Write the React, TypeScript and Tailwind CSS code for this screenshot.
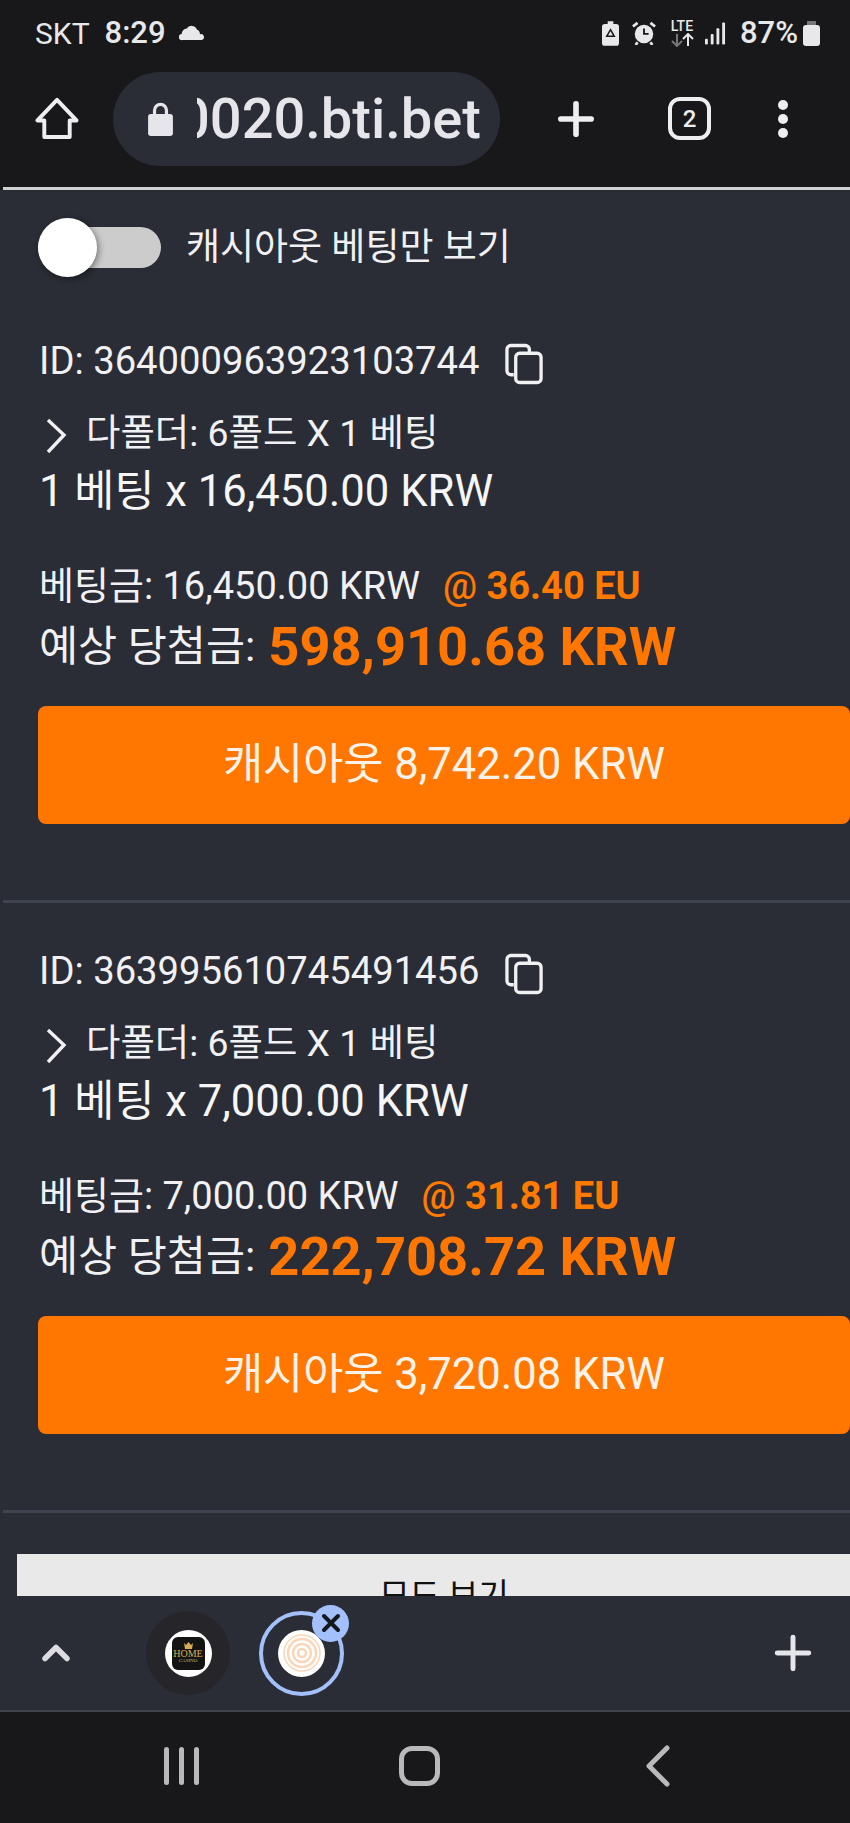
import { Plus, ChevronUp } from "lucide-react";

const font = { fontFamily: '"Roboto", "Noto Sans CJK KR", sans-serif' };

function BetCard({ id, stake, rate, win, cash }: { id: string; stake: string; rate: string; win: string; cash: string }) {
  return (
    <div className="pt-[47px]">
      <div className="flex h-[44px] items-center pl-[39px] text-[38.2px] text-[#f1f1f3]">
        <span>ID: {id}</span>
        <svg className="ml-[25px] mt-[4px]" width="39" height="42" viewBox="0 0 40 42" fill="none" stroke="#f1f1f3" strokeWidth="3.4">
          <rect x="11" y="10" width="26" height="30" rx="4" />
          <path d="M9 32H6a4 4 0 0 1-4-4V6a4 4 0 0 1 4-4h15a4 4 0 0 1 4 4v3" />
        </svg>
      </div>
      <div className="mt-[29px] flex h-[40px] items-center pl-[45px] text-[37.4px] text-[#f1f1f3]">
        <svg className="mt-[6px]" width="22" height="36" viewBox="0 0 22 36" fill="none" stroke="#f1f1f3" strokeWidth="3.4">
          <path d="M3 2l16 15L3 34" />
        </svg>
        <span className="ml-[19px]">다폴더: 6폴드 X 1 베팅</span>
      </div>
      <div className="mt-[17px] flex h-[44px] items-center pl-[39px] text-[43.6px] text-[#f6f6f7]">1 베팅 x {stake} KRW</div>
      <div className="mt-[52px] flex h-[40px] items-center pl-[39px] text-[38px] text-[#f1f1f3]">
        <span>베팅금: {stake} KRW</span>
        <span className="ml-[23px] font-medium text-[#ff7a00]">
          @ <span className="font-bold">{rate} EU</span>
        </span>
      </div>
      <div className="mt-[16px] flex h-[50px] items-center pl-[39px] text-[42.5px] text-[#f1f1f3]">
        <span>예상 당첨금:</span>
        <span className="ml-[13px] text-[54.2px] font-bold text-[#ff7700]">{win} KRW</span>
      </div>
      <div className="ml-[38px] mt-[34px] flex h-[118px] w-[812px] items-center justify-center rounded-[8px] bg-[#ff7700] text-[43.6px] text-[#fbf3ea]">
        캐시아웃 {cash} KRW
      </div>
      <div className="ml-[3px] mt-[76px] h-[3px] bg-[#3f424f]" />
    </div>
  );
}

export default function App() {
  return (
    <div style={font} className="flex h-[1823px] w-[850px] flex-col overflow-hidden bg-[#18181a]">
      {/* status bar */}
      <div className="flex h-[66px] shrink-0 items-center justify-between pl-[35px] pr-[30px] text-[#e8e8ea]">
        <div className="flex items-center">
          <span className="text-[30px]">SKT</span>
          <span className="ml-[15px] text-[31px] font-medium">8:29</span>
          <svg className="ml-[13px]" width="26" height="16" viewBox="0 0 28 18" fill="#e8e8ea">
            <path d="M3 17a3.5 3.5 0 0 1-.6-7A6 6 0 0 1 8 4a6.5 6.5 0 0 1 11.5 1A6 6 0 0 1 23 10.300a3.400 3.400 0 0 1 2 6.700z" />
          </svg>
        </div>
        <div className="flex items-center">
          <svg width="17" height="25" viewBox="0 0 18 26" fill="#e8e8ea">
            <path d="M6 0h6v3h3a3 3 0 0 1 3 3v17a3 3 0 0 1-3 3H3a3 3 0 0 1-3-3V6a3 3 0 0 1 3-3h3z" />
            <path d="M9 9l4 7H5z" fill="none" stroke="#18181a" strokeWidth="1.600" />
          </svg>
          <svg className="ml-[13px]" width="24" height="24" viewBox="0 0 26 26">
            <circle cx="13" cy="14" r="10" fill="#e8e8ea" />
            <path d="M13 8v6h5" fill="none" stroke="#18181a" strokeWidth="2" />
            <path d="M1 6l5-4M25 6l-5-4M6 23l-2 3M20 23l2 3" stroke="#e8e8ea" strokeWidth="3" />
          </svg>
          <div className="ml-[14px] flex flex-col items-center leading-none">
            <span className="text-[14px] font-medium leading-[14px]">LTE</span>
            <svg width="24" height="14" viewBox="0 0 24 14" fill="none" strokeWidth="2">
              <path d="M7 1v11M2 8l5 5 5-5" stroke="#77777a" />
              <path d="M18 13V2M13 6l5-5 5 5" stroke="#e8e8ea" />
            </svg>
          </div>
          <svg className="ml-[11px]" width="21" height="24" viewBox="0 0 22 24" fill="#e8e8ea">
            <rect x="0" y="18" width="3" height="6" rx="1" />
            <rect x="6" y="13" width="3" height="11" rx="1" />
            <rect x="12" y="7" width="3" height="17" rx="1" />
            <rect x="18" y="1" width="3" height="23" rx="1" />
          </svg>
          <span className="ml-[14px] text-[31px] font-medium">87%</span>
          <svg className="ml-[5px]" width="17" height="25" viewBox="0 0 17 25" fill="#e8e8ea">
            <rect x="4" y="0" width="9" height="4" fill="#77777a" />
            <rect x="0" y="4" width="17" height="21" rx="3" />
          </svg>
        </div>
      </div>

      {/* browser toolbar */}
      <div className="flex h-[121px] shrink-0 items-start">
        <svg className="ml-[35px] mt-[31px]" width="44" height="43" viewBox="0 0 44 44" fill="none" stroke="#eeeef0" strokeWidth="4" strokeLinejoin="round">
          <path d="M22 3L2 24h7v17h26V24h7z" />
        </svg>
        <div className="ml-[34px] mt-[6px] flex h-[94px] w-[387px] items-center overflow-hidden rounded-full bg-[#2a2c36] pl-[35px]">
          <svg width="25" height="34" viewBox="0 0 27 37" fill="#e6e6ea" className="shrink-0">
            <path d="M7 14V9a6.500 6.500 0 0 1 13 0v5" fill="none" stroke="#e6e6ea" strokeWidth="3.500" />
            <rect x="0" y="13" width="27" height="24" rx="3" />
          </svg>
          <div className="ml-[24px] w-[284px] overflow-hidden">
            <div className="-ml-[19px] whitespace-nowrap text-[56px] font-medium text-[#e6e6ea]">0020.bti.bet</div>
          </div>
        </div>
        <Plus size={52} strokeWidth={2.6} color="#eeeef0" className="ml-[50px] mt-[27px]" />
        <div className="ml-[66px] mt-[31px] flex h-[43px] w-[43px] items-center justify-center rounded-[12px] border-[4px] border-[#eeeef0] text-[24px] font-medium text-[#eeeef0]">2</div>
        <div className="ml-[67px] mt-[34px] flex flex-col gap-[4px]">
          <div className="h-[10px] w-[10px] rounded-full bg-[#eeeef0]" />
          <div className="h-[10px] w-[10px] rounded-full bg-[#eeeef0]" />
          <div className="h-[10px] w-[10px] rounded-full bg-[#eeeef0]" />
        </div>
      </div>
      <div className="ml-[3px] h-[3px] shrink-0 bg-[#d0d0d4]" />

      {/* page */}
      <div className="min-h-0 flex-1 overflow-hidden bg-[#2a2c36]">
        <div className="mt-[28px] flex h-[59px] items-center pl-[38px]">
          <div className="relative h-[41px] w-[123px] rounded-full bg-[#cccccc]">
            <div className="absolute left-0 top-[-9px] h-[59px] w-[59px] rounded-full bg-white shadow-[2px_2px_6px_rgba(0,0,0,0.4)]" />
          </div>
          <span className="ml-[25px] text-[37px] text-[#f1f1f3]">캐시아웃 베팅만 보기</span>
        </div>
        <div className="mt-[16px]">
          <BetCard id="364000963923103744" stake="16,450.00" rate="36.40" win="598,910.68" cash="8,742.20" />
          <BetCard id="363995610745491456" stake="7,000.00" rate="31.81" win="222,708.72" cash="3,720.08" />
        </div>
        <div className="ml-[17px] mt-[41px] flex h-[84px] w-[854px] items-center justify-center bg-[#e9e9e9] text-[33px] text-[#111]">모드 보기</div>
      </div>

      {/* tab strip */}
      <div className="relative flex h-[114px] shrink-0 items-center bg-[#2a2c36]">
        <ChevronUp size={44} strokeWidth={3} color="#dcdce0" className="ml-[34px]" />
        <div className="ml-[68px] flex h-[84px] w-[84px] items-center justify-center rounded-full bg-[#26262a]">
          <div className="flex h-[47px] w-[47px] items-center justify-center rounded-full bg-white">
            <div className="flex h-[33px] w-[33px] flex-col items-center justify-center rounded-[6px] bg-[#141414] leading-none text-[#d8ac55]" style={{ fontFamily: '"Liberation Serif", serif' }}>
              <svg width="9" height="7" viewBox="0 0 9 7" fill="#d8ac55">
                <path d="M0 1l2 2 2.500-3L7 3l2-2-1 6H1z" />
              </svg>
              <span className="text-[10px] leading-[9px]">HOME</span>
              <span className="text-[5px] leading-[6px]">CASINO</span>
            </div>
          </div>
        </div>
        <div className="relative ml-[29px] flex h-[85px] w-[85px] items-center justify-center rounded-full border-[4px] border-[#a4c0fa]">
          <div className="flex h-[47px] w-[47px] items-center justify-center rounded-full bg-white">
            <svg width="38" height="38" viewBox="0 0 38 38" fill="none" stroke="#fad5b8" strokeWidth="2.500">
              <circle cx="19" cy="19" r="4" />
              <circle cx="19" cy="19" r="9" />
              <circle cx="19" cy="19" r="14" />
              <circle cx="19" cy="19" r="18" strokeWidth="1.500" />
            </svg>
          </div>
          <div className="absolute right-[-9px] top-[-10px] flex h-[37px] w-[37px] items-center justify-center rounded-full bg-[#a4c0fa]">
            <svg width="22" height="22" viewBox="0 0 22 22" stroke="#15171f" strokeWidth="4" strokeLinecap="round">
              <path d="M4 4l14 14M18 4L4 18" />
            </svg>
          </div>
        </div>
        <Plus size={54} strokeWidth={2.2} color="#e6e6ea" className="absolute right-[30px] top-[30px]" />
      </div>
      <div className="h-[2px] shrink-0 bg-[#40424e]" />

      {/* nav bar */}
      <div className="relative flex h-[111px] shrink-0 items-center pb-[4px]">
        <div className="ml-[164px] flex gap-[10px]">
          <div className="h-[38px] w-[5px] rounded-full bg-[#b9b9bc]" />
          <div className="h-[38px] w-[5px] rounded-full bg-[#b9b9bc]" />
          <div className="h-[38px] w-[5px] rounded-full bg-[#b9b9bc]" />
        </div>
        <div className="ml-[200px] h-[40px] w-[41px] rounded-[13px] border-[5px] border-[#b9b9bc]" />
        <svg className="ml-[205px]" width="26" height="42" viewBox="0 0 26 42" fill="none" stroke="#b9b9bc" strokeWidth="5" strokeLinecap="round" strokeLinejoin="round">
          <path d="M22 3L4 21l18 18" />
        </svg>
      </div>
    </div>
  );
}
